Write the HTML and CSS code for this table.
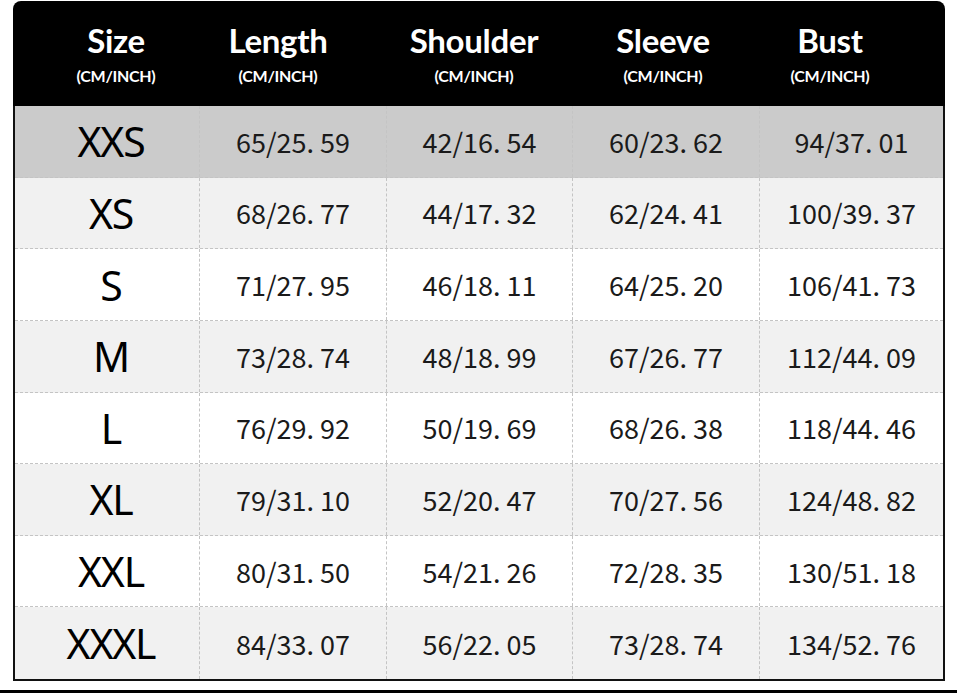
FILE: index.html
```html
<!DOCTYPE html>
<html>
<head>
<meta charset="utf-8">
<link rel="stylesheet" href="styles.css">
</head>
<body>
<div class="chart">
  <div class="head">
    <div class="hcell"><span class="ht">Size</span><span class="hu">(CM/INCH)</span></div>
    <div class="hcell"><span class="ht">Length</span><span class="hu">(CM/INCH)</span></div>
    <div class="hcell"><span class="ht">Shoulder</span><span class="hu">(CM/INCH)</span></div>
    <div class="hcell"><span class="ht">Sleeve</span><span class="hu">(CM/INCH)</span></div>
    <div class="hcell"><span class="ht">Bust</span><span class="hu">(CM/INCH)</span></div>
  </div>
  <div class="body">
    <div class="row r-dark"><div class="cell size">XXS</div><div class="cell">65/25. 59</div><div class="cell">42/16. 54</div><div class="cell">60/23. 62</div><div class="cell">94/37. 01</div></div>
    <div class="row r-light"><div class="cell size">XS</div><div class="cell">68/26. 77</div><div class="cell">44/17. 32</div><div class="cell">62/24. 41</div><div class="cell">100/39. 37</div></div>
    <div class="row r-white"><div class="cell size">S</div><div class="cell">71/27. 95</div><div class="cell">46/18. 11</div><div class="cell">64/25. 20</div><div class="cell">106/41. 73</div></div>
    <div class="row r-light"><div class="cell size">M</div><div class="cell">73/28. 74</div><div class="cell">48/18. 99</div><div class="cell">67/26. 77</div><div class="cell">112/44. 09</div></div>
    <div class="row r-white"><div class="cell size">L</div><div class="cell">76/29. 92</div><div class="cell">50/19. 69</div><div class="cell">68/26. 38</div><div class="cell">118/44. 46</div></div>
    <div class="row r-light"><div class="cell size">XL</div><div class="cell">79/31. 10</div><div class="cell">52/20. 47</div><div class="cell">70/27. 56</div><div class="cell">124/48. 82</div></div>
    <div class="row r-white"><div class="cell size">XXL</div><div class="cell">80/31. 50</div><div class="cell">54/21. 26</div><div class="cell">72/28. 35</div><div class="cell">130/51. 18</div></div>
    <div class="row r-light last"><div class="cell size">XXXL</div><div class="cell">84/33. 07</div><div class="cell">56/22. 05</div><div class="cell">73/28. 74</div><div class="cell">134/52. 76</div></div>
  </div>
</div>
<div class="rule"></div>
</body>
</html>
```

FILE: styles.css
```css
html, body {
  margin: 0;
  padding: 0;
  background: #ffffff;
}
body {
  width: 957px;
  height: 693px;
  overflow: hidden;
  position: relative;
}
.chart {
  margin: 1px 0 0 13px;
  width: 932px;
}
.head {
  display: grid;
  grid-template-columns: 206px 118px 274px 104px 230px;
  height: 105px;
  background: #000;
  border-radius: 8px 8px 0 0;
}
.hcell {
  display: flex;
  flex-direction: column;
  align-items: center;
  color: #fff;
  padding-top: 19px;
}
.ht {
  font-family: "Lato", "Liberation Sans", sans-serif;
  font-weight: 700;
  font-size: 33px;
  line-height: 40px;
  letter-spacing: -0.3px;
}
.hu {
  font-family: "Lato", "Liberation Sans", sans-serif;
  font-weight: 700;
  font-size: 16px;
  line-height: 20px;
  margin-top: 6px;
  letter-spacing: -0.3px;
}
.body {
  border: 2px solid #111;
  border-top: none;
  height: 573px;
  display: grid;
  grid-template-rows: repeat(8, 1fr);
}
.row {
  display: grid;
  grid-template-columns: 184px 187px 186px 187px 184px;
  border-bottom: 1px dashed #c4c4c4;
}
.row.last {
  border-bottom: none;
}
.r-dark { background: #cbcbcb; }
.r-light { background: #f1f1f1; }
.r-white { background: #ffffff; }
.cell {
  display: flex;
  align-items: center;
  justify-content: center;
  border-left: 1px dashed #c4c4c4;
  font-family: "Noto Sans CJK SC", "Noto Sans", sans-serif;
  font-size: 27px;
  color: #1a1a1a;
  letter-spacing: 0px;
}
.cell.size {
  border-left: none;
  padding-left: 8px;
  font-family: "Noto Sans", "Liberation Sans", sans-serif;
  font-size: 41px;
  color: #000;
  letter-spacing: -1.2px;
}
.rule {
  position: absolute;
  left: 0;
  right: 0;
  top: 690px;
  height: 3px;
  background: #000;
}
```
